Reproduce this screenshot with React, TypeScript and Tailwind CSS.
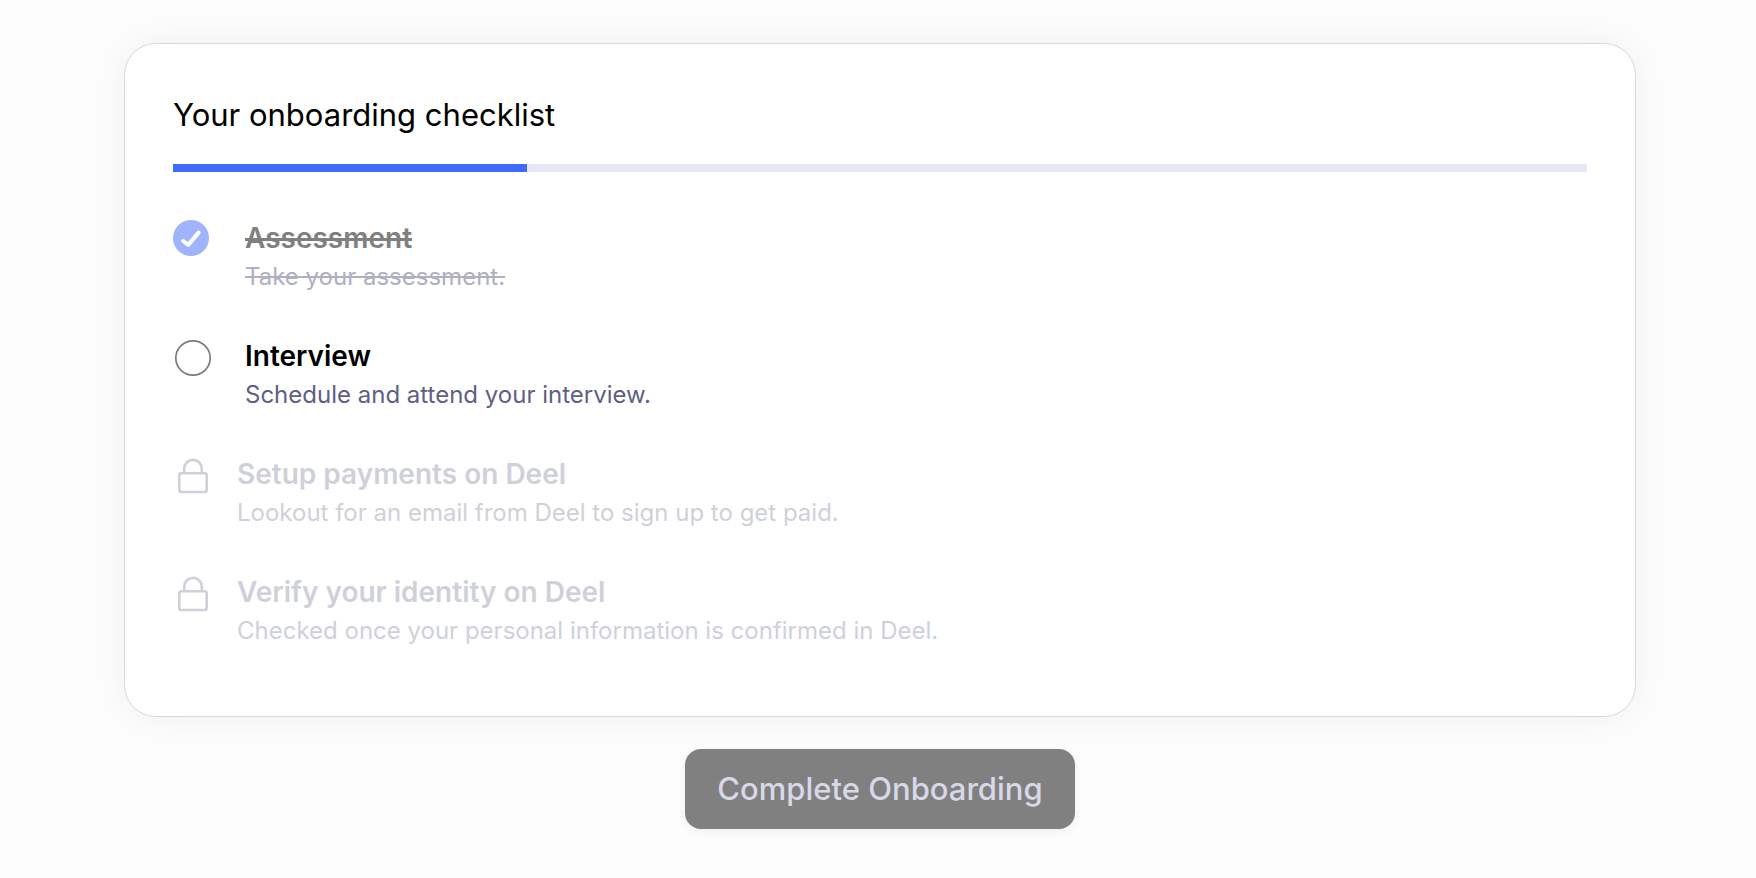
import React from "react";

type Status = "done" | "open" | "locked";

interface Step {
  title: string;
  text: string;
  status: Status;
}

const steps: Step[] = [
  { title: "Assessment", text: "Take your assessment.", status: "done" },
  { title: "Interview", text: "Schedule and attend your interview.", status: "open" },
  { title: "Setup payments on Deel", text: "Lookout for an email from Deel to sign up to get paid.", status: "locked" },
  { title: "Verify your identity on Deel", text: "Checked once your personal information is confirmed in Deel.", status: "locked" },
];

const styles: Record<Status, { row: string; title: string; text: string }> = {
  done: {
    row: "gap-8",
    title: "text-[#808080] line-through decoration-[3px]",
    text: "text-[#afb0c1] line-through decoration-2",
  },
  open: { row: "gap-8", title: "text-black", text: "text-[#5f6084]" },
  locked: { row: "gap-6", title: "text-[#cfd1d9]", text: "text-[#cfd1d9]" },
};

function StepIcon({ status }: { status: Status }) {
  return (
    <svg className="size-10 shrink-0" viewBox="0 0 40 40" fill="none" aria-hidden="true">
      {status === "done" && (
        <>
          <circle cx="18" cy="18" r="18" fill="#9fb4fd" />
          <path d="M10.2 21 15.2 24.9 25.6 12.6" stroke="#fff" strokeWidth="4" strokeLinecap="round" strokeLinejoin="round" />
        </>
      )}
      {status === "open" && <circle cx="20" cy="20" r="17.2" stroke="#7c7c7c" strokeWidth="1.7" />}
      {status === "locked" && (
        <g stroke="#cfd1d9" strokeWidth="2.6">
          <rect x="6.3" y="17.3" width="27.4" height="18.7" rx="2" />
          <path d="M11.2 17.3V12.7a8.8 8.8 0 0 1 17.6 0v4.6" />
        </g>
      )}
    </svg>
  );
}

export default function App() {
  return (
    <main className="flex min-h-screen flex-col items-center gap-8 bg-[#fcfcfc] pt-[43px] pr-[120px] pb-12 pl-[124px] font-['Inter','Liberation_Sans',sans-serif]">
      <section className="w-full rounded-[32px] border border-[#d6d6ea] bg-white px-12 pt-12 pb-16 shadow-[0_0_32px_rgba(0,0,0,0.05)]">
        <h1 className="text-[31px] leading-[46px] text-black">Your onboarding checklist</h1>
        <div
          className="mt-[26px] h-2 bg-[#e6e8f5]"
          role="progressbar"
          aria-label="Onboarding progress"
          aria-valuenow={25}
          aria-valuemin={0}
          aria-valuemax={100}
        >
          <div className="h-full w-1/4 bg-[#406af8]" />
        </div>
        <ul className="mt-12 flex flex-col gap-10">
          {steps.map((step) => {
            const s = styles[step.status];
            return (
              <li key={step.title} className={`flex items-start ${s.row}`}>
                <StepIcon status={step.status} />
                <div>
                  <h2 className={`text-[28px] leading-9 font-semibold ${s.title}`}>{step.title}</h2>
                  <p className={`text-2xl leading-[42px] ${s.text}`}>{step.text}</p>
                </div>
              </li>
            );
          })}
        </ul>
      </section>
      <button
        type="button"
        disabled
        className="h-20 rounded-2xl bg-[#808080] px-8 text-[31px] leading-9 font-medium text-[#d8d8e9] shadow-[0_2px_8px_rgba(0,0,0,0.06)]"
      >
        Complete Onboarding
      </button>
    </main>
  );
}
